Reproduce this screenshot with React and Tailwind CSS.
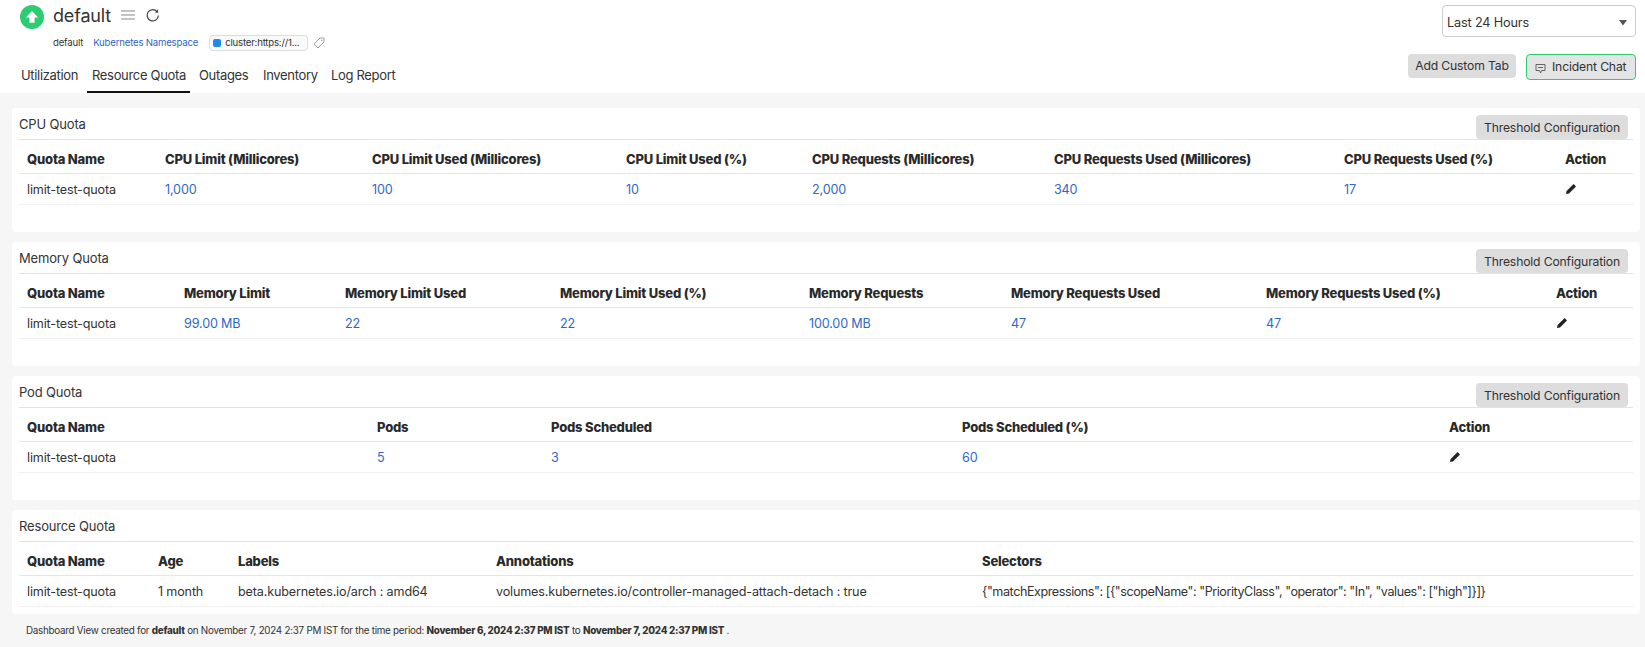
import React from 'react';

const blue = 'text-[#2f67c9]';

function PencilIcon() {
    return (
        <svg width="12" height="12" viewBox="0 0 12 12" className="text-[#222] -mt-[3px]">
            <path d="M8.6 1 11 3.4 4 10.4 1 11l.6-3z" fill="currentColor" />
        </svg>
    );
}

function ThresholdButton() {
    return (
        <button className="h-6 w-[152px] pt-[3px] rounded bg-[#dddddd] text-[12.2px] text-[#333] whitespace-nowrap">
            Threshold Configuration
        </button>
    );
}

function Table({ cols, headers, rows }) {
    return (
        <div>
            <div className={`grid ${cols} h-[34px] pt-[7px] items-center border-b border-[#e6e6e6] font-extrabold text-[13px] tracking-[-0.015em] text-[#2a2a2a]`}>
                {headers.map((h) => (
                    <div key={h} className="pl-2 whitespace-nowrap">{h}</div>
                ))}
            </div>
            {rows.map((row, i) => (
                <div key={i} className={`grid ${cols} h-[31px] pt-[3px] items-center border-b border-[#f0f0f0] text-[12.6px] text-[#333]`}>
                    {row.map((cell, j) => {
                        if (typeof cell === 'string') {
                            return <div key={j} className={`pl-2 whitespace-nowrap ${cell.startsWith('{') ? 'tracking-[-0.035em]' : ''}`}>{cell}</div>;
                        }
                        return (
                            <div key={j} className={`pl-2 whitespace-nowrap ${blue}`}>
                                {cell.edit ? <PencilIcon /> : cell.link}
                            </div>
                        );
                    })}
                </div>
            ))}
        </div>
    );
}

function Card({ title, action, children, className }) {
    return (
        <section className={`bg-white rounded px-[7px] ${className}`}>
            <div className="flex items-end justify-between h-[32px] border-b border-[#e2e2e2] pr-[5px]">
                <span className="text-[13px] text-[#333] pb-[5px]">{title}</span>
                {action}
            </div>
            {children}
        </section>
    );
}

const l = (link) => ({ link });
const edit = { edit: true };

export default function App() {
    return (
        <div className="w-[1645px] h-[647px] overflow-hidden bg-[#f6f6f6] font-['Inter',sans-serif] tracking-[-0.01em]">
            <header className="bg-white h-[93px] flex justify-between">
                <div className="pl-5">
                    <div className="flex items-start h-[32px] pt-[5px]">
                        <span className="w-6 h-6 rounded-full bg-[#2ecc71] flex items-center justify-center">
                            <svg width="14" height="14" viewBox="0 0 12 12">
                                <path d="M6 .8 11.2 6.4H8.2V11H3.8V6.4H.8z" fill="white" />
                            </svg>
                        </span>
                        <span className="ml-[9px] -mt-[3px] text-[18px] text-[#333]">default</span>
                        <svg width="14" height="10" viewBox="0 0 14 10" className="ml-[10px] mt-[5px]">
                            <path d="M0 1h14M0 5h14M0 9h14" stroke="#b0b0b0" strokeWidth="1.5" />
                        </svg>
                        <svg width="15" height="15" viewBox="0 0 16 16" className="ml-[10px] mt-[3px]" fill="none">
                            <path d="M13 4.2A6 6 0 1 0 14.2 8" stroke="#444" strokeWidth="1.3" />
                            <path d="M10.5 4.8 14 5V1.4z" fill="#444" />
                        </svg>
                    </div>
                    <div className="flex items-center ml-[33px] mt-[3px] h-4 text-[9.6px] tracking-[-0.02em]">
                        <span className="text-[#333]">default</span>
                        <span className={`ml-[10px] ${blue}`}>Kubernetes Namespace</span>
                        <span className="ml-[11px] w-[99px] h-4 flex items-center px-[3px] border border-[#ddd] rounded-sm bg-[#fafafa] text-[#333] whitespace-nowrap">
                            <span className="w-2 h-2 rounded-[2px] bg-[#1e88f0] mr-[4px]" />
                            cluster:https://1...
                        </span>
                        <svg width="12" height="12" viewBox="0 0 12 12" fill="none" className="ml-[5px]">
                            <path d="M7 1h4v4L5 11 1 7z" stroke="#999" strokeWidth="0.9" />
                            <circle cx="8.8" cy="3.2" r="0.7" fill="#999" />
                        </svg>
                    </div>
                    <nav className="flex mt-[8px] -ml-[5px] h-[34px] text-[13px] tracking-[-0.025em] text-[#333] whitespace-nowrap">
                        <span className="px-[6px] pt-[7px] w-[72px]">Utilization</span>
                        <span className="px-[5px] pt-[7px] w-[103px] border-b-2 border-[#111]">Resource Quota</span>
                        <span className="pl-[9px] pt-[7px] w-[73px]">Outages</span>
                        <span className="pt-[7px] w-[68px]">Inventory</span>
                        <span className="pt-[7px]">Log Report</span>
                    </nav>
                </div>
                <div className="pr-[9px] flex flex-col items-end">
                    <div className="mt-[5px] w-[194px] h-[32px] pt-[3px] border border-[#ccc] rounded flex items-center justify-between pl-[4px] pr-[7px] text-[12.7px] text-[#333]">
                        Last 24 Hours
                        <svg width="10" height="6" viewBox="0 0 10 6"><path d="M1 0h8L5 5.5z" fill="#555" /></svg>
                    </div>
                    <div className="mt-[17px] flex items-start gap-[10px]">
                        <button className="h-6 w-[108px] rounded bg-[#dddddd] text-[12.2px] text-[#333]">Add Custom Tab</button>
                        <button className="h-[26px] w-[110px] pl-[8px] rounded border border-[#2ecc71] bg-[#e4e4e4] flex items-center text-[12.2px] text-[#333] whitespace-nowrap">
                            <svg width="11" height="11" viewBox="0 0 11 11" fill="none" className="mr-[6px] mt-[2px]">
                                <path d="M1 1.5h9v6H6.5L5.5 10 4.5 7.5H1zM3 4.5h5" stroke="#555" strokeWidth="0.9" />
                            </svg>
                            Incident Chat
                        </button>
                    </div>
                </div>
            </header>

            <main className="pt-[15px] pl-3 pr-[5px] flex flex-col gap-[10px]">
                <Card title="CPU Quota" action={<ThresholdButton />} className="h-[124px]">
                    <Table
                        cols="grid-cols-[138px_207px_254px_186px_242px_290px_221px_76px]"
                        headers={['Quota Name', 'CPU Limit (Millicores)', 'CPU Limit Used (Millicores)', 'CPU Limit Used (%)', 'CPU Requests (Millicores)', 'CPU Requests Used (Millicores)', 'CPU Requests Used (%)', 'Action']}
                        rows={[['limit-test-quota', l('1,000'), l('100'), l('10'), l('2,000'), l('340'), l('17'), edit]]}
                    />
                </Card>
                <Card title="Memory Quota" action={<ThresholdButton />} className="h-[124px]">
                    <Table
                        cols="grid-cols-[157px_161px_215px_249px_202px_255px_290px_85px]"
                        headers={['Quota Name', 'Memory Limit', 'Memory Limit Used', 'Memory Limit Used (%)', 'Memory Requests', 'Memory Requests Used', 'Memory Requests Used (%)', 'Action']}
                        rows={[['limit-test-quota', l('99.00 MB'), l('22'), l('22'), l('100.00 MB'), l('47'), l('47'), edit]]}
                    />
                </Card>
                <Card title="Pod Quota" action={<ThresholdButton />} className="h-[124px]">
                    <Table
                        cols="grid-cols-[350px_174px_411px_487px_192px]"
                        headers={['Quota Name', 'Pods', 'Pods Scheduled', 'Pods Scheduled (%)', 'Action']}
                        rows={[['limit-test-quota', l('5'), l('3'), l('60'), edit]]}
                    />
                </Card>
                <Card title="Resource Quota" className="h-[104px]">
                    <Table
                        cols="grid-cols-[131px_80px_258px_486px_659px]"
                        headers={['Quota Name', 'Age', 'Labels', 'Annotations', 'Selectors']}
                        rows={[['limit-test-quota', '1 month', 'beta.kubernetes.io/arch : amd64', 'volumes.kubernetes.io/controller-managed-attach-detach : true', '{"matchExpressions": [{"scopeName": "PriorityClass", "operator": "In", "values": ["high"]}]}']]}
                    />
                </Card>
            </main>

            <footer className="pl-[26px] pt-[10px] text-[9.8px] tracking-[-0.025em] text-[#333]">
                Dashboard View created for <b className="font-extrabold">default</b> on November 7, 2024 2:37 PM IST for the time period: <b className="font-extrabold">November 6, 2024 2:37 PM IST</b> to <b className="font-extrabold">November 7, 2024 2:37 PM IST</b> .
            </footer>
        </div>
    );
}
